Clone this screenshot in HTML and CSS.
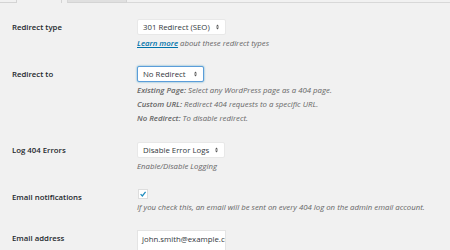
FILE: index.html
```html
<!DOCTYPE html>
<html lang="en">
<head>
  <meta charset="UTF-8" />
  <title>404 Settings</title>
  <link rel="stylesheet" href="styles.css">
</head>

<body>
  <div class="tabs">
    <span class="tab-gap"></span>
    <span class="tab active"></span>
    <span class="tab"></span>
    <span class="tab-rest"></span>
  </div>

  <div class="form">
    <div class="row">
      <div class="label">Redirect type</div>
      <div class="field">
        <div class="select">301 Redirect (SEO) <svg class="arrows" viewBox="0 0 6 10"><path d="M3 0 L6 4 H0 Z M3 10 L6 6 H0 Z" /></svg></div>
        <p class="desc"><a href="#">Learn more</a> about these redirect types</p>
      </div>
    </div>

    <div class="row">
      <div class="label">Redirect to</div>
      <div class="field">
        <div class="select focus">No Redirect <svg class="arrows" viewBox="0 0 6 10"><path d="M3 0 L6 4 H0 Z M3 10 L6 6 H0 Z" /></svg></div>
        <p class="desc lines">
          <b>Existing Page:</b> Select any WordPress page as a 404 page.<br>
          <b>Custom URL:</b> Redirect 404 requests to a specific URL.<br>
          <b>No Redirect:</b> To disable redirect.
        </p>
      </div>
    </div>

    <div class="row">
      <div class="label">Log 404 Errors</div>
      <div class="field">
        <div class="select">Disable Error Logs <svg class="arrows" viewBox="0 0 6 10"><path d="M3 0 L6 4 H0 Z M3 10 L6 6 H0 Z" /></svg></div>
        <p class="desc">Enable/Disable Logging</p>
      </div>
    </div>

    <div class="row">
      <div class="label">Email notifications</div>
      <div class="field">
        <div class="check"><svg viewBox="0 0 10 10"><path d="M2 5.2 L4.2 7.4 L8.2 2.4" /></svg></div>
        <p class="desc">If you check this, an email will be sent on every 404 log on the admin email account.</p>
      </div>
    </div>

    <div class="row">
      <div class="label">Email address</div>
      <div class="field">
        <div class="input">john.smith@example.com</div>
      </div>
    </div>
  </div>
</body>
</html>
```

FILE: styles.css
```css
body {
  margin: 0;
  background: #f1f1f1;
  font-family: 'Open Sans', sans-serif;
  color: #23282d;
  overflow: hidden;
  height: 250px;
}

.tabs {
  display: flex;
  height: 3px;
}

.tab-gap {
  width: 16px;
  border-bottom: 1px solid #d4d4d4;
  border-right: 1px solid #d4d4d4;
}

.tab {
  width: 44px;
  border-right: 1px solid #d4d4d4;
}

.tab + .tab {
  width: 58px;
  margin-left: 5px;
  background: #e0e0e0;
  border-left: 1px solid #d8d8d8;
  border-bottom: 1px solid #d4d4d4;
}

.tab-rest {
  flex: 1;
  border-bottom: 1px solid #d8d8d8;
  height: 2px;
}

.form {
  padding: 16px 0 0 12px;
}

.row {
  display: flex;
  margin-bottom: 17px;
}

.label {
  width: 125px;
  font-size: 7.8px;
  font-weight: 600;
  line-height: 16px;
}

.select {
  display: flex;
  align-items: center;
  width: max-content;
  height: 16px;
  padding: 0 6px 0 5px;
  background: #fff;
  border: 1px solid #e8e8e8;
  border-radius: 2px;
  box-sizing: border-box;
  font-size: 7.8px;
  color: #32373c;
}

.select .arrows {
  width: 3px;
  height: 6px;
  margin-left: 6px;
  fill: #555;
}

.select.focus {
  border-color: #5b9dd9;
  box-shadow: 0 0 2px rgba(30, 140, 190, .8);
  width: 67px;
  justify-content: space-between;
}

.desc {
  margin: 3px 0 0;
  font-size: 7.8px;
  font-style: italic;
  color: #666;
  line-height: 11px;
}

.desc b {
  font-weight: 600;
}

.desc.lines {
  line-height: 14px;
  margin-top: 1px;
}

.desc a {
  color: #0073aa;
  font-weight: 600;
}

.check {
  width: 8px;
  height: 8px;
  background: #fff;
  border: 1px solid #ddd;
  margin-left: 1px;
}

.check svg {
  display: block;
  width: 8px;
  height: 8px;
  fill: none;
  stroke: #1e8cbe;
  stroke-width: 1.6;
}

.input {
  width: 89px;
  height: 22px;
  background: #fff;
  border: 1px solid #e4e4e4;
  box-sizing: border-box;
  padding: 3px 0 0 4px;
  font-size: 7.8px;
  white-space: nowrap;
  overflow: hidden;
  color: #32373c;
}
```
